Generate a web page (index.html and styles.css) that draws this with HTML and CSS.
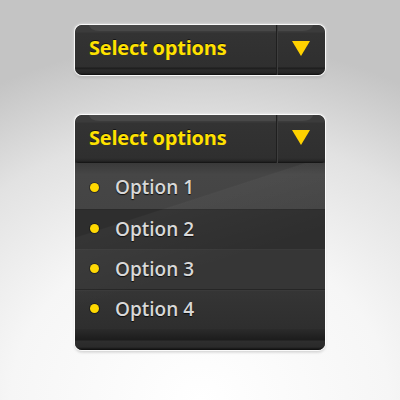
FILE: index.html
```html
<!DOCTYPE html>
<html>
<head>
<meta charset="utf-8">
<link rel="stylesheet" href="styles.css">
</head>
<body>
<div class="stage">
  <div class="select">
    <div class="head">
      <span class="label">Select options</span>
      <span class="arrow"><svg width="18" height="15" viewBox="0 0 18 15"><path d="M0 0H18L9 15Z" fill="#ffd200"/></svg></span>
    </div>
  </div>
  <div class="select open">
    <div class="head">
      <span class="label">Select options</span>
      <span class="arrow"><svg width="18" height="15" viewBox="0 0 18 15"><path d="M0 0H18L9 15Z" fill="#ffd200"/></svg></span>
    </div>
    <ul class="list">
      <li class="opt o1"><span class="dot"></span>Option 1</li>
      <li class="opt o2"><span class="dot"></span>Option 2</li>
      <li class="opt o3"><span class="dot"></span>Option 3</li>
      <li class="opt o4"><span class="dot"></span>Option 4</li>
    </ul>
    <div class="foot"></div>
  </div>
</div>
</body>
</html>
```
FILE: styles.css
```css
html, body {
  margin: 0;
  height: 400px;
}
body {
  background: radial-gradient(ellipse 420px 360px at 50% 100%, #ffffff 0%, #f6f6f6 45%, #e2e2e2 75%, #c4c4c4 100%);
  font-family: "Open Sans", "DejaVu Sans", sans-serif;
  overflow: hidden;
}
.stage {
  padding: 25px 0 0 75px;
  display: flex;
  flex-direction: column;
  gap: 40px;
}
.select {
  position: relative;
  width: 250px;
  border-radius: 7px;
  background: #2c2c2c;
  box-shadow: 0 0 0 1px rgba(255,255,255,0.85), 0 0 3px 1px rgba(255,255,255,0.6), 0 2px 3px rgba(0,0,0,0.25);
  overflow: hidden;
}
.head {
  position: relative;
  height: 50px;
  display: flex;
  background: linear-gradient(#3b3b3b 0, #3b3b3b 7px, #333 8px, #2f2f2f 42px, #1c1c1c 43px, #2b2b2b 45px, #262626 48px, #0e0e0e 50px);
  border-radius: 7px;
}
.head::before {
  content: "";
  position: absolute;
  left: 14px;
  right: 12px;
  top: 0;
  height: 6px;
  background: #484848;
  border-radius: 0 0 10px 10px / 0 0 6px 6px;
}
.label {
  position: relative;
  flex: 1;
  padding-left: 14px;
  line-height: 46px;
  font-weight: 700;
  font-size: 20px;
  color: #ffe100;
  letter-spacing: -0.2px;
  text-shadow: 0 -1px 0 rgba(0,0,0,0.6);
}
.arrow {
  position: relative;
  width: 49px;
  border-left: 1px solid #1f1f1f;
  box-shadow: inset 1px 0 0 #3e3e3e;
  display: flex;
  align-items: center;
  justify-content: center;
  padding-bottom: 3px;
  box-sizing: border-box;
}
.open .head {
  height: 48px;
  border-radius: 7px 7px 4px 4px;
  background: linear-gradient(#3b3b3b 0, #3b3b3b 7px, #333 8px, #2f2f2f 43px, #262626 46px, #111 48px);
}
.list {
  position: relative;
  list-style: none;
  margin: 0;
  padding: 0;
}
.list::after {
  content: "";
  position: absolute;
  inset: 0;
  pointer-events: none;
  background: linear-gradient(162deg, rgba(255,255,255,0) 0, rgba(255,255,255,0) 30%, rgba(255,255,255,0.035) 30.5%, rgba(255,255,255,0) 60%);
}
.opt {
  display: flex;
  align-items: center;
  height: 40px;
  padding-left: 15px;
  padding-bottom: 2px;
  font-size: 19px;
  font-weight: 600;
  color: #d8d8d8;
  text-shadow: 0 1px 1px rgba(0,0,0,0.8);
  box-sizing: border-box;
}
.o1 { height: 46px; padding-bottom: 0; padding-top: 2px; background: linear-gradient(#3a3a3a, #464646 25%, #444 100%); }
.o2 { background: #2e2e2e; border-top: 1px solid #2a2a2a; }
.o3 { background: #363636; border-top: 1px solid #3a3a3a; }
.o4 { background: linear-gradient(#353535, #2e2e2e); border-top: 1px solid #262626; box-shadow: inset 0 1px 0 #3a3a3a; }
.dot {
  width: 9px;
  height: 9px;
  border-radius: 50%;
  background: #ffd800;
  box-shadow: 0 0 0 1px rgba(0,0,0,0.35);
  margin-right: 16px;
}
.foot {
  height: 21px;
  background: linear-gradient(#2b2b2b 0, #1c1c1c 11px, #2e2e2e 12px, #2a2a2a 18px, #0c0c0c 21px);
}
```
